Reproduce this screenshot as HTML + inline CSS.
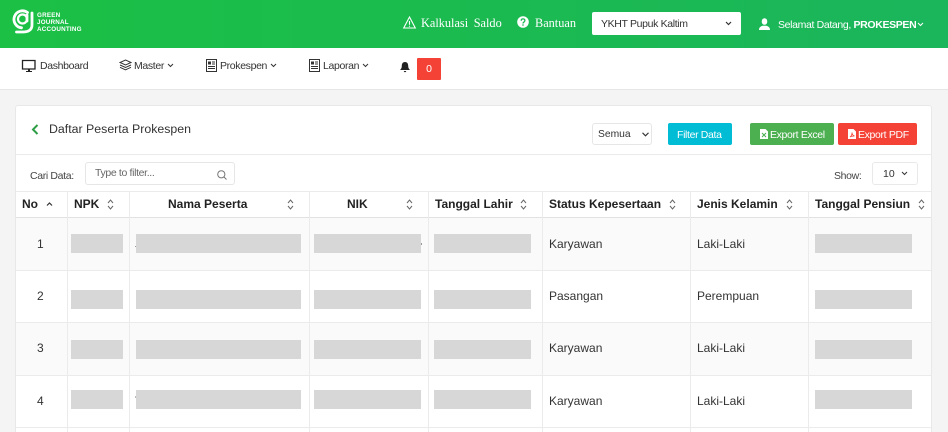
<!DOCTYPE html>
<html><head><meta charset="utf-8">
<style>
html,body{margin:0;padding:0;width:948px;height:432px;overflow:hidden;background:#f4f4f4;font-family:"Liberation Sans",sans-serif;color:#333;font-size:12px}
#wrap{position:relative;width:948px;height:432px;overflow:hidden}
.a{position:absolute;white-space:nowrap}
#top{left:0;top:0;width:948px;height:48px;background:linear-gradient(90deg,#1bc044,#1bb55c)}
#nav{left:0;top:48px;width:948px;height:41px;background:#fff;border-bottom:1px solid #e6e6e6}
#card{left:15px;top:105px;width:917px;height:327px;background:#fff;border:1px solid #e8e8e8;border-bottom:0;box-sizing:border-box;border-radius:3px 3px 0 0}
.l{background:#ebebeb}
.g{background:#d7d7d7;height:19px}
.s{font-family:"Liberation Serif",serif;color:#fff;font-size:12.3px}
.th{font-weight:bold;font-size:12px;color:#222;top:197px;line-height:15px}
.td{font-size:12px;color:#333;line-height:15px}
.n{font-size:10.5px;letter-spacing:-.35px;line-height:14px}
.btn{border-radius:2px;height:22px;top:123px}
.bt{color:#fff;font-size:10.5px;letter-spacing:-.35px;line-height:14px;top:128px}
svg{position:absolute;overflow:visible}
</style></head><body><div id="wrap">
<div class="a" id="top"></div>
<div class="a" id="nav"></div>

<svg style="left:0;top:0" width="40" height="40" viewBox="0 0 40 40" fill="none" stroke="#fff" stroke-width="2.800" stroke-linecap="round"><path d="M27.500 12.500A8.500 8.500 0 1 0 21.500 27.800"/><circle cx="22.500" cy="19" r="4.500" stroke-width="2.200"/><path d="M27 15v6M32 13v12c0 5-4 7-9 7h-6.500"/></svg>
<div class="a" style="left:37px;top:12px;color:#fff;font-size:6.300px;font-weight:bold;line-height:7.200px;letter-spacing:.2px">GREEN<br>JOURNAL<br>ACCOUNTING</div>

<svg style="left:403px;top:16px" width="13" height="13" viewBox="0 0 13 13" fill="none" stroke="#fff" stroke-width="1.100"><path d="M6.500 1L12.300 12H.7z"/><path d="M6.500 5v3.800M6.500 9.800v1"/></svg>
<div class="a s" style="left:421px;top:16px;word-spacing:2.500px">Kalkulasi Saldo</div>
<svg style="left:517px;top:16px" width="12" height="12" viewBox="0 0 12 12"><circle cx="6" cy="6" r="5.800" fill="#fff"/><path d="M4.200 4.700c0-2.400 3.700-2.400 3.700-.2 0 1.400-1.900 1.500-1.900 3" fill="none" stroke="#1bb855" stroke-width="1.300"/><rect x="5.300" y="8.300" width="1.400" height="1.400" fill="#1bb855"/></svg>
<div class="a s" style="left:535px;top:16px">Bantuan</div>
<div class="a" style="left:592px;top:12px;width:149px;height:23px;background:#fff;border-radius:2px"></div>
<div class="a n" style="left:601px;top:17px;color:#333">YKHT Pupuk Kaltim</div>
<svg style="left:725px;top:21px" width="7" height="5" viewBox="0 0 7 5" fill="none" stroke="#333" stroke-width="1.200"><path d="M1 1l2.500 2.500L6 1"/></svg>
<svg style="left:759px;top:18px" width="11" height="12" viewBox="0 0 11 12" fill="#fff"><ellipse cx="5.500" cy="3.500" rx="2.800" ry="3.300"/><path d="M0 12c0-3 2-3.500 3.500-4.200h4C9 8.500 11 9 11 12z"/></svg>
<div class="a n" style="left:778px;top:18px;color:#fff">Selamat Datang, <b>PROKESPEN</b></div>
<svg style="left:917px;top:22px" width="7" height="5" viewBox="0 0 7 5" fill="none" stroke="#fff" stroke-width="1"><path d="M1 1l2.500 2.500L6 1"/></svg>

<svg style="left:22px;top:60px" width="14" height="12" viewBox="0 0 14 12"><path d="M.5.500h12.500v8.500H.5z" fill="none" stroke="#222" stroke-width="1.300"/><path d="M4 11h6v1H4zM6 9h2v2H6z" fill="#222"/></svg>
<div class="a n" style="left:40px;top:59px">Dashboard</div>
<svg style="left:119px;top:59px" width="13" height="12" viewBox="0 0 13 12" fill="none" stroke="#333" stroke-width="1"><path d="M6.500 1L12 3.500 6.500 6 1 3.500zM1 6l5.500 2.500L12 6M1 8.300l5.500 2.500L12 8.300"/></svg>
<div class="a n" style="left:134px;top:59px">Master</div>
<svg style="left:167px;top:63px" width="7" height="5" viewBox="0 0 7 5" fill="none" stroke="#333" stroke-width="1"><path d="M1 1l2.500 2.500L6 1"/></svg>
<svg style="left:206px;top:59px" width="11" height="13" viewBox="0 0 11 13" fill="none" stroke="#333"><rect x=".5" y=".5" width="10" height="12"/><rect x="2" y="2.500" width="3" height="3" fill="#333" stroke="none"/><path d="M6 3h3M6 5h3M2 7.500h7M2 9.500h7" stroke-width=".9"/></svg>
<div class="a n" style="left:220px;top:59px">Prokespen</div>
<svg style="left:270px;top:63px" width="7" height="5" viewBox="0 0 7 5" fill="none" stroke="#333" stroke-width="1"><path d="M1 1l2.500 2.500L6 1"/></svg>
<svg style="left:309px;top:59px" width="11" height="13" viewBox="0 0 11 13" fill="none" stroke="#333"><rect x=".5" y=".5" width="10" height="12"/><rect x="2" y="2.500" width="3" height="3" fill="#333" stroke="none"/><path d="M6 3h3M6 5h3M2 7.500h7M2 9.500h7" stroke-width=".9"/></svg>
<div class="a n" style="left:323px;top:59px">Laporan</div>
<svg style="left:362px;top:63px" width="7" height="5" viewBox="0 0 7 5" fill="none" stroke="#333" stroke-width="1"><path d="M1 1l2.500 2.500L6 1"/></svg>
<svg style="left:400px;top:62px" width="10" height="11" viewBox="0 0 10 11" fill="#222"><path d="M5 0c2.500 0 3.200 2 3.200 4 0 2 .8 3 1.800 4H0c1-1 1.800-2 1.800-4S2.500 0 5 0z"/><path d="M3.800 9h2.400c0 1.600-2.400 1.600-2.400 0z"/></svg>
<div class="a" style="left:417px;top:58px;width:24px;height:22px;background:#f44336;color:#fff;text-align:center;line-height:22px;font-size:10.500px;border-radius:1px">0</div>

<div class="a" id="card"></div>
<svg style="left:31px;top:124px" width="8" height="11" viewBox="0 0 8 11" fill="none" stroke="#2e9e46" stroke-width="2"><path d="M6.500 1L2 5.500 6.500 10"/></svg>
<div class="a" style="left:49px;top:122px;font-size:12.350px;line-height:15px;color:#333">Daftar Peserta Prokespen</div>

<div class="a" style="left:592px;top:123px;width:60px;height:22px;background:#fff;border:1px solid #e6e6e6;border-radius:3px;box-sizing:border-box"></div>
<div class="a" style="left:598px;top:128px;font-size:10.300px;line-height:13px">Semua</div>
<svg style="left:642px;top:132px" width="7" height="5" viewBox="0 0 7 5" fill="none" stroke="#333" stroke-width="1.100"><path d="M.5 .8l3 3 3-3"/></svg>
<div class="a btn" style="left:668px;width:64px;background:#00bcd4"></div>
<div class="a bt" style="left:677px">Filter Data</div>
<div class="a btn" style="left:750px;width:84px;background:#4caf50"></div>
<div class="a bt" style="left:770px">Export Excel</div>
<div class="a btn" style="left:838px;width:79px;background:#f44336"></div>
<div class="a bt" style="left:858px">Export PDF</div>
<svg style="left:760px;top:129px" width="8" height="10" viewBox="0 0 8 10"><path d="M0 0h5.500L8 2.500V10H0z" fill="#fff"/><path d="M2 4l4 4M6 4L2 8" stroke="#4caf50" stroke-width="1"/></svg>
<svg style="left:848px;top:129px" width="8" height="10" viewBox="0 0 8 10"><path d="M0 0h5.500L8 2.500V10H0z" fill="#fff"/><path d="M2 8c1.500-1 2-3 2-4.500C4 5 5 6.500 6.500 7 5 7 3 7.300 2 8z" fill="none" stroke="#f44336" stroke-width=".8"/></svg>

<div class="a l" style="left:16px;top:154px;width:915px;height:1px"></div>

<div class="a n" style="left:30px;top:169px;color:#444">Cari Data:</div>
<div class="a" style="left:85px;top:162px;width:150px;height:23px;border:1px solid #e6e6e6;border-radius:3px;box-sizing:border-box;background:#fff"></div>
<div class="a n" style="left:95px;top:166px;color:#666">Type to filter...</div>
<svg style="left:217px;top:170px" width="10" height="10" viewBox="0 0 10 10" fill="none" stroke="#777" stroke-width="1"><circle cx="4.300" cy="4.300" r="3.600"/><path d="M7 7l2.500 2.500"/></svg>

<div class="a n" style="left:834px;top:169px;color:#444">Show:</div>
<div class="a" style="left:872px;top:162px;width:46px;height:23px;border:1px solid #e9e9e9;border-radius:3px;box-sizing:border-box;background:#fff"></div>
<div class="a" style="left:883px;top:167px;font-size:10.500px;line-height:14px">10</div>
<svg style="left:901px;top:171px" width="7" height="5" viewBox="0 0 7 5" fill="none" stroke="#333" stroke-width="1"><path d="M1 1l2.500 2.500L6 1"/></svg>

<div class="a" style="left:16px;top:218px;width:915px;height:52px;background:#fafafa"></div>
<div class="a" style="left:16px;top:323px;width:915px;height:52px;background:#fafafa"></div>

<div class="a l" style="left:16px;top:191px;width:915px;height:1px"></div>
<div class="a" style="left:16px;top:217px;width:915px;height:1px;background:#e2e2e2"></div>
<div class="a l" style="left:16px;top:270px;width:915px;height:1px"></div>
<div class="a l" style="left:16px;top:322px;width:915px;height:1px"></div>
<div class="a l" style="left:16px;top:375px;width:915px;height:1px"></div>
<div class="a l" style="left:16px;top:427px;width:915px;height:1px"></div>

<div class="a l" style="left:67px;top:191px;width:1px;height:241px"></div>
<div class="a l" style="left:129px;top:191px;width:1px;height:241px"></div>
<div class="a l" style="left:309px;top:191px;width:1px;height:241px"></div>
<div class="a l" style="left:428px;top:191px;width:1px;height:241px"></div>
<div class="a l" style="left:542px;top:191px;width:1px;height:241px"></div>
<div class="a l" style="left:690px;top:191px;width:1px;height:241px"></div>
<div class="a l" style="left:808px;top:191px;width:1px;height:241px"></div>

<div class="a th" style="left:22px">No</div>
<div class="a th" style="left:74px">NPK</div>
<div class="a th" style="left:168px">Nama Peserta</div>
<div class="a th" style="left:347px">NIK</div>
<div class="a th" style="left:435px">Tanggal Lahir</div>
<div class="a th" style="left:549px">Status Kepesertaan</div>
<div class="a th" style="left:697px">Jenis Kelamin</div>
<div class="a th" style="left:815px">Tanggal Pensiun</div>

<svg style="left:46px;top:202px" width="7" height="4" viewBox="0 0 7 4" fill="none" stroke="#333" stroke-width="1.200"><path d="M1 3.500l2.500-2.500 2.500 2.500"/></svg>
<svg style="left:107px;top:199px" width="7" height="11" viewBox="0 0 7 11" fill="none" stroke="#666" stroke-width="1"><path d="M1 4l2.500-3L6 4M1 7l2.500 3L6 7"/></svg>
<svg style="left:287px;top:199px" width="7" height="11" viewBox="0 0 7 11" fill="none" stroke="#666" stroke-width="1"><path d="M1 4l2.500-3L6 4M1 7l2.500 3L6 7"/></svg>
<svg style="left:406px;top:199px" width="7" height="11" viewBox="0 0 7 11" fill="none" stroke="#666" stroke-width="1"><path d="M1 4l2.500-3L6 4M1 7l2.500 3L6 7"/></svg>
<svg style="left:520px;top:199px" width="7" height="11" viewBox="0 0 7 11" fill="none" stroke="#666" stroke-width="1"><path d="M1 4l2.500-3L6 4M1 7l2.500 3L6 7"/></svg>
<svg style="left:669px;top:199px" width="7" height="11" viewBox="0 0 7 11" fill="none" stroke="#666" stroke-width="1"><path d="M1 4l2.500-3L6 4M1 7l2.500 3L6 7"/></svg>
<svg style="left:786px;top:199px" width="7" height="11" viewBox="0 0 7 11" fill="none" stroke="#666" stroke-width="1"><path d="M1 4l2.500-3L6 4M1 7l2.500 3L6 7"/></svg>
<svg style="left:918px;top:199px" width="7" height="11" viewBox="0 0 7 11" fill="none" stroke="#666" stroke-width="1"><path d="M1 4l2.500-3L6 4M1 7l2.500 3L6 7"/></svg>

<div class="a td" style="left:37px;top:237px">1</div>
<div class="a td" style="left:37px;top:289px">2</div>
<div class="a td" style="left:37px;top:341px">3</div>
<div class="a td" style="left:37px;top:394px">4</div>

<div class="a g" style="left:71px;top:234px;width:52px"></div>
<div class="a g" style="left:136px;top:234px;width:165px"></div>
<div class="a g" style="left:314px;top:234px;width:107px"></div>
<div class="a g" style="left:434px;top:234px;width:97px"></div>
<div class="a g" style="left:815px;top:234px;width:97px"></div>

<div class="a g" style="left:71px;top:290px;width:52px"></div>
<div class="a g" style="left:136px;top:290px;width:165px"></div>
<div class="a g" style="left:314px;top:290px;width:107px"></div>
<div class="a g" style="left:434px;top:290px;width:97px"></div>
<div class="a g" style="left:815px;top:290px;width:97px"></div>

<div class="a g" style="left:71px;top:340px;width:52px"></div>
<div class="a g" style="left:136px;top:340px;width:165px"></div>
<div class="a g" style="left:314px;top:340px;width:107px"></div>
<div class="a g" style="left:434px;top:340px;width:97px"></div>
<div class="a g" style="left:815px;top:340px;width:97px"></div>

<div class="a g" style="left:71px;top:390px;width:52px"></div>
<div class="a g" style="left:136px;top:390px;width:165px"></div>
<div class="a g" style="left:314px;top:390px;width:107px"></div>
<div class="a g" style="left:434px;top:390px;width:97px"></div>
<div class="a g" style="left:815px;top:390px;width:97px"></div>

<div class="a" style="left:421px;top:243px;width:1px;height:2px;background:#999"></div>
<div class="a" style="left:135px;top:246px;width:1px;height:1px;background:#999"></div>
<div class="a" style="left:135px;top:396px;width:1px;height:2px;background:#bbb"></div>

<div class="a td" style="left:549px;top:237px">Karyawan</div>
<div class="a td" style="left:549px;top:289px">Pasangan</div>
<div class="a td" style="left:549px;top:341px">Karyawan</div>
<div class="a td" style="left:549px;top:394px">Karyawan</div>
<div class="a td" style="left:697px;top:237px">Laki-Laki</div>
<div class="a td" style="left:697px;top:289px">Perempuan</div>
<div class="a td" style="left:697px;top:341px">Laki-Laki</div>
<div class="a td" style="left:697px;top:394px">Laki-Laki</div>
</div></body></html>
